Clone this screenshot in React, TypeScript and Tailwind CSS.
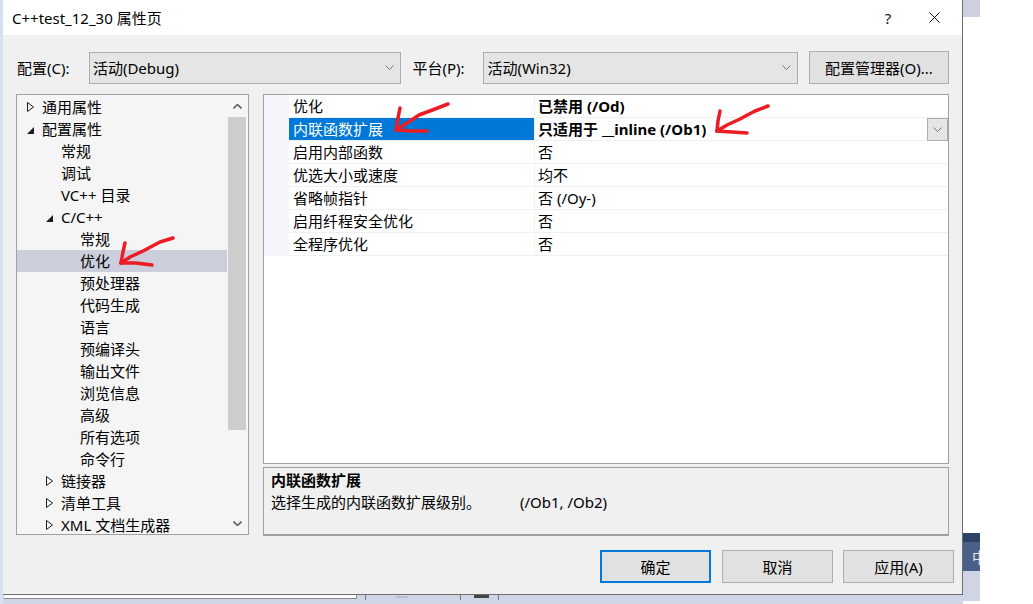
import React from 'react';

type TreeNode = {
  label: string;
  level: number;
  toggle?: 'open' | 'closed';
  selected?: boolean;
};

const treeNodes: TreeNode[] = [
  { label: '通用属性', level: 0, toggle: 'closed' },
  { label: '配置属性', level: 0, toggle: 'open' },
  { label: '常规', level: 1 },
  { label: '调试', level: 1 },
  { label: 'VC++ 目录', level: 1 },
  { label: 'C/C++', level: 1, toggle: 'open' },
  { label: '常规', level: 2 },
  { label: '优化', level: 2, selected: true },
  { label: '预处理器', level: 2 },
  { label: '代码生成', level: 2 },
  { label: '语言', level: 2 },
  { label: '预编译头', level: 2 },
  { label: '输出文件', level: 2 },
  { label: '浏览信息', level: 2 },
  { label: '高级', level: 2 },
  { label: '所有选项', level: 2 },
  { label: '命令行', level: 2 },
  { label: '链接器', level: 1, toggle: 'closed' },
  { label: '清单工具', level: 1, toggle: 'closed' },
  { label: 'XML 文档生成器', level: 1, toggle: 'closed' },
];

const properties = [
  { name: '优化', value: '已禁用 (/Od)', bold: true },
  { name: '内联函数扩展', value: '只适用于 __inline (/Ob1)', bold: true, selected: true },
  { name: '启用内部函数', value: '否' },
  { name: '优选大小或速度', value: '均不' },
  { name: '省略帧指针', value: '否 (/Oy-)' },
  { name: '启用纤程安全优化', value: '否' },
  { name: '全程序优化', value: '否' },
];

const Chevron = ({ up = false, bold = false }: { up?: boolean; bold?: boolean }) => (
  <svg width="9" height="5" viewBox="0 0 9 5">
    <polyline
      points={up ? '0.5,4.5 4.5,0.5 8.5,4.5' : '0.5,0.5 4.5,4.5 8.5,0.5'}
      fill="none"
      stroke={bold ? '#606060' : '#707070'}
      strokeWidth={bold ? 1.6 : 1}
    />
  </svg>
);

const Toggle = ({ state }: { state: 'open' | 'closed' }) =>
  state === 'closed' ? (
    <svg width="7" height="10" viewBox="0 0 7 10">
      <polygon points="0.5,0.5 6.5,5 0.5,9.5" fill="none" stroke="#1e1e1e" strokeWidth="1" />
    </svg>
  ) : (
    <svg width="7" height="7" viewBox="0 0 7 7" className="mt-[3px]">
      <polygon points="7,0 7,7 0,7" fill="#1e1e1e" />
    </svg>
  );

const ComboBox = ({ text, width }: { text: string; width: string }) => (
  <div className={`${width} h-[32px] flex items-center border border-[#adadad] bg-[#e5e5e5] pl-[3px] pr-[6px]`}>
    <span className="flex-1">{text}</span>
    <Chevron />
  </div>
);

const Button = ({ label, primary = false, width = 'w-[111px]' }: { label: string; primary?: boolean; width?: string }) => (
  <div
    className={`${width} h-[33px] flex items-center justify-center bg-[#e1e1e1] ${
      primary ? 'border-2 border-[#0078d7]' : 'border border-[#adadad]'
    }`}
  >
    {label}
  </div>
);

const Arrows = () => (
  <svg width="1033" height="604" viewBox="0 0 1033 604" className="absolute left-0 top-0 pointer-events-none">
    <g fill="none" stroke="#ec1c24" strokeWidth="3.5" strokeLinecap="round" strokeLinejoin="round">
      <path d="M173 238 L160 242 L143 251 L130 257 L121 263" />
      <path d="M125 243 L123 252 L121 263" />
      <path d="M121 263 L136 263 L152 265" />

      <path d="M448 104 L435 109 L419 115 L407 123 L396 130" />
      <path d="M400 108 L398 118 L396 130" />
      <path d="M397 130 L412 131 L427 131" />

      <path d="M768 106 L755 111 L740 119 L727 125 L717 131" />
      <path d="M720 111 L718 121 L717 131" />
      <path d="M717 131 L732 132 L747 133" />
    </g>
  </svg>
);

export default function App() {
  return (
    <div className="relative w-[1033px] h-[604px] flex bg-white overflow-hidden font-['Noto_Sans','Noto_Sans_CJK_SC',sans-serif] text-[15px] leading-[22px] text-black">
      <div className="w-[963px] flex flex-col">
        <div className="h-[595px] flex">
          <div className="w-[3px] bg-[#d6e0f0]" />
          {/* dialog */}
          <div className="w-[960px] flex flex-col border-r border-b border-[#6e6e6e]">
            <div className="h-[35px] flex items-center bg-white">
              <span className="pl-[9px]">C++test_12_30 属性页</span>
              <div className="ml-auto flex pr-[5px]">
                <div className="w-[46px] h-[35px] flex items-center justify-center text-[15px] text-[#111]">?</div>
                <div className="w-[46px] h-[35px] flex items-center justify-center">
                  <svg width="11" height="11" viewBox="0 0 11 11">
                    <path d="M0.5 0.5 L10.5 10.5 M10.5 0.5 L0.5 10.5" stroke="#111" strokeWidth="1" />
                  </svg>
                </div>
              </div>
            </div>

            <div className="flex-1 flex flex-col bg-[#f0f0f0] pl-[13px] pr-[13px]">
              {/* configuration row */}
              <div className="mt-[16px] h-[33px] flex items-center">
                <span className="w-[73px] pl-[1px]">配置(C):</span>
                <ComboBox text="活动(Debug)" width="w-[312px]" />
                <span className="w-[83px] pl-[12px]">平台(P):</span>
                <ComboBox text="活动(Win32)" width="w-[315px]" />
                <div className="ml-[11px]">
                  <Button label="配置管理器(O)..." width="w-[140px]" />
                </div>
              </div>

              {/* main area */}
              <div className="mt-[10px] flex">
                {/* tree */}
                <div className="w-[233px] h-[441px] flex border border-[#a0a0a0] bg-[#f5f5f5]">
                  <div className="flex-1 pt-[1px] overflow-hidden">
                    {treeNodes.map((node, i) => (
                      <div
                        key={i}
                        className={`h-[22px] flex items-center whitespace-nowrap ${node.selected ? 'bg-[#cccedb]' : ''}`}
                      >
                        <div style={{ width: node.level * 19 }} />
                        <div className="w-[25px] pl-[10px] flex items-center">
                          {node.toggle && <Toggle state={node.toggle} />}
                        </div>
                        <span>{node.label}</span>
                      </div>
                    ))}
                  </div>
                  <div className="w-[20px] mr-[1px] flex flex-col">
                    <div className="h-[22px] flex items-center justify-center">
                      <Chevron up bold />
                    </div>
                    <div className="h-[313px] mx-[1px] bg-[#cdcdcd]" />
                    <div className="flex-1" />
                    <div className="h-[22px] flex items-center justify-center">
                      <Chevron bold />
                    </div>
                  </div>
                </div>

                {/* property grid + description */}
                <div className="ml-[14px] w-[686px] flex flex-col">
                  <div className="h-[370px] border border-[#a0a0a0] bg-white">
                    {properties.map((p, i) => (
                      <div key={i} className="h-[23px] flex">
                        <div className="w-[25px] bg-[#f4f6fb]" />
                        <div
                          className={`w-[246px] pl-[4px] border-r border-b border-[#f0f0f0] whitespace-nowrap ${
                            p.selected ? 'bg-[#0078d7] text-white' : ''
                          }`}
                        >
                          {p.name}
                        </div>
                        <div className={`flex-1 flex pl-[3px] border-b border-[#f0f0f0] whitespace-nowrap ${p.bold ? 'font-bold' : ''}`}>
                          <span className="flex-1">{p.value}</span>
                          {p.selected && (
                            <div className="w-[21px] h-[23px] flex items-center justify-center border border-[#adadad] bg-[#e5e5e5]">
                              <Chevron />
                            </div>
                          )}
                        </div>
                      </div>
                    ))}
                  </div>
                  <div className="mt-[3px] h-[69px] border border-b-2 border-[#a0a0a0] bg-[#f0f0f0] pl-[7px] pt-[1px]">
                    <div className="font-bold">内联函数扩展</div>
                    <div className="flex whitespace-nowrap">
                      <span className="w-[249px]">选择生成的内联函数扩展级别。</span>
                      <span>(/Ob1, /Ob2)</span>
                    </div>
                  </div>
                </div>
              </div>

              {/* buttons */}
              <div className="mt-[14px] ml-auto -mr-[5px] flex">
                <Button label="确定" primary />
                <div className="ml-[11px]">
                  <Button label="取消" />
                </div>
                <div className="ml-[10px]">
                  <Button label="应用(A)" />
                </div>
              </div>
            </div>
          </div>
        </div>
        {/* taskbar fragment under the dialog */}
        <div className="h-[9px] flex bg-[#d0d6e6]">
          <div className="w-[3px] bg-[#d6e0f0]" />
          <div className="ml-[1px] w-[353px] h-[4px] bg-white border-r border-b border-[#8a8a8a]" />
          <div className="ml-[8px] w-[1px] h-[5px] bg-[#777]" />
          <div className="ml-[30px] mt-[1px] w-[12px] h-[2px] bg-[#b9bfcc]" />
          <div className="ml-[52px] w-[1px] h-[5px] bg-[#777]" />
          <div className="ml-[13px] w-[15px] h-[3px] bg-[#444]" />
          <div className="ml-[9px] w-[1px] h-[5px] bg-[#777]" />
        </div>
      </div>

      {/* background window edge on the right */}
      <div className="w-[70px] flex flex-col">
        <div className="w-[17px] h-[17px] bg-[#cdd0e0]" />
        <div className="mt-auto w-[17px] h-[9px] bg-[#2e4366]" />
        <div className="w-[17px] h-[29px] bg-[#4b6088] overflow-hidden pl-[9px] flex items-center text-[15px] text-[#e6eaf2]">
          中
        </div>
        <div className="w-[17px] h-[30px] bg-[#cfd5e5]" />
        <div className="h-[3px]" />
      </div>

      <Arrows />
    </div>
  );
}
